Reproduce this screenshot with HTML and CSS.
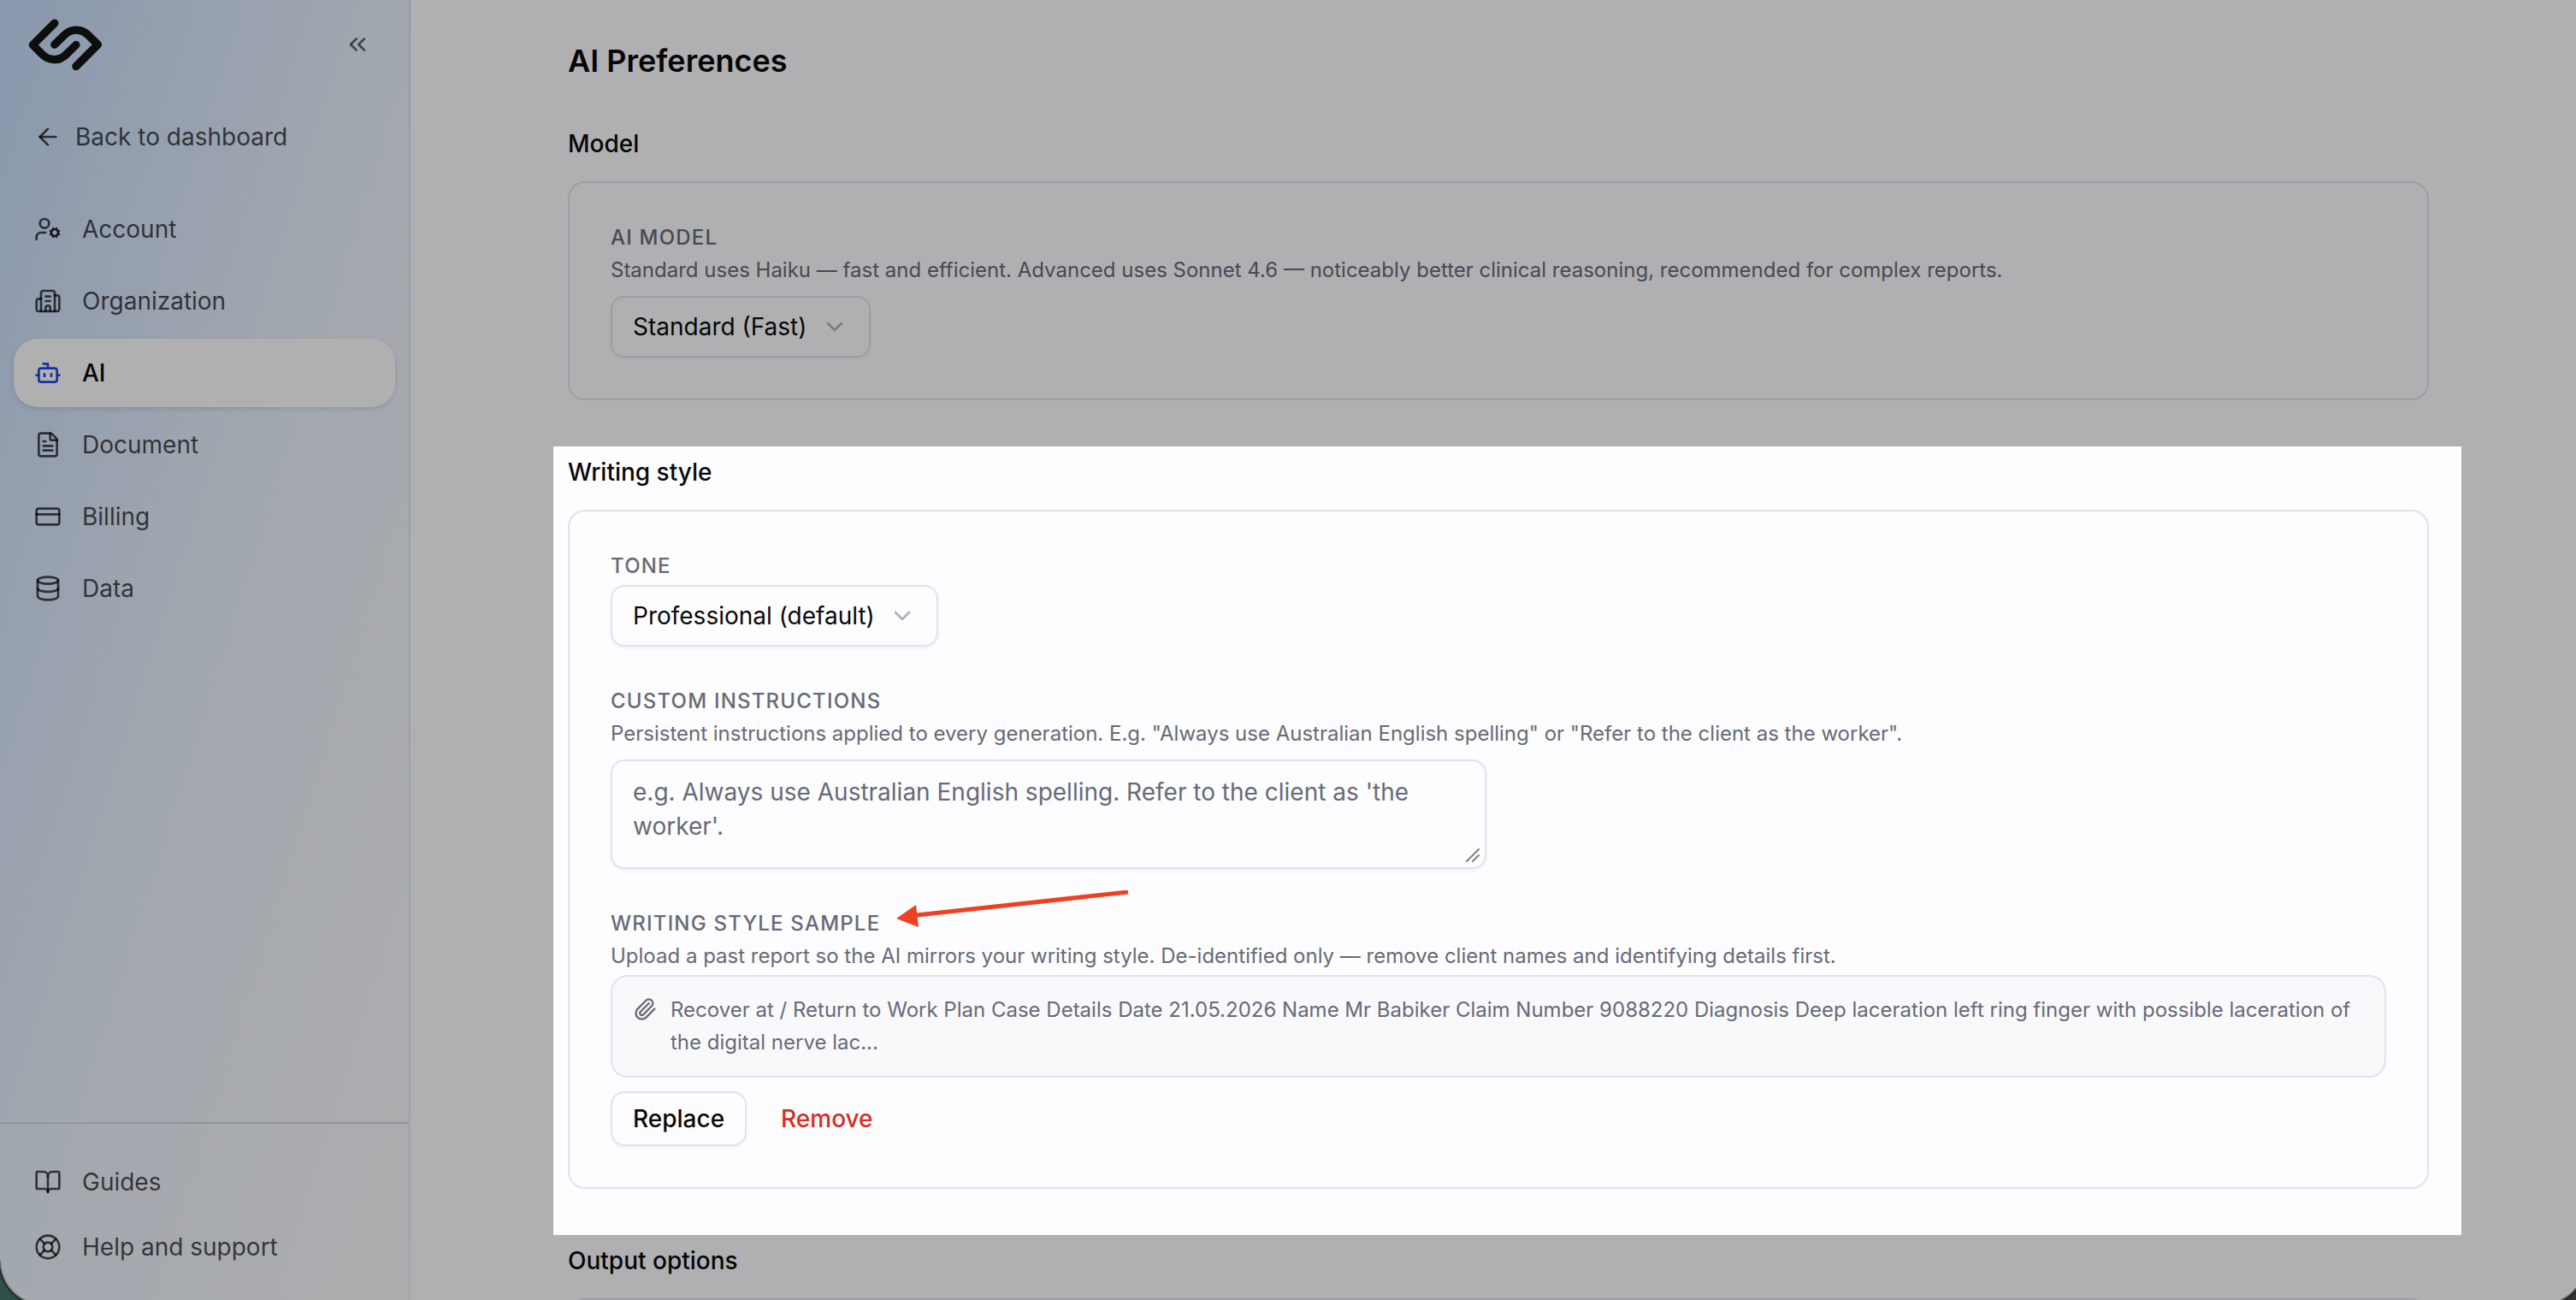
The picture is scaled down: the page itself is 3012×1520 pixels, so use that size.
FILE: index.html
```html
<!DOCTYPE html>
<html lang="en">
<head>
    <meta charset="UTF-8">
    <meta name="viewport" content="width=device-width, initial-scale=1.0">
    <title>AI Preferences</title>
    <link rel="stylesheet" href="styles.css">
</head>
<body>
    <div class="app">
        <aside class="sidebar">
            <div class="sidebar-top">
                <svg class="logo" viewBox="100 65 260 182" role="img" aria-label="Home">
                    <path d="M192 80L116 156L148 188C172 212 208 214 232 190L267 156"/>
                    <path d="M267 231L343 155L311 123C287 99 251 97 227 121L192 155"/>
                </svg>
                <button class="collapse" type="button" aria-label="Collapse sidebar">
                    <svg class="icon" viewBox="0 0 24 24"><path d="m11 17-5-5 5-5"/><path d="m18 17-5-5 5-5"/></svg>
                </button>
            </div>

            <a class="back" href="#">
                <svg class="icon" viewBox="0 0 24 24"><path d="m12 19-7-7 7-7"/><path d="M19 12H5"/></svg>
                Back to dashboard
            </a>

            <nav class="nav">
                <a class="nav-item" href="#">
                    <svg class="icon" viewBox="0 0 24 24"><path d="M10 15H6a4 4 0 0 0-4 4v2"/><path d="m14.305 16.53.923-.382"/><path d="m15.228 13.852-.923-.383"/><path d="m16.852 12.228-.383-.923"/><path d="m16.852 17.772-.383.924"/><path d="m19.148 12.228.383-.923"/><path d="m19.53 18.696-.382-.924"/><path d="m20.772 13.852.924-.383"/><path d="m20.772 16.148.924.383"/><circle cx="18" cy="15" r="3"/><circle cx="9" cy="7" r="4"/></svg>
                    Account
                </a>
                <a class="nav-item" href="#">
                    <svg class="icon" viewBox="0 0 24 24"><path d="M10 12h4"/><path d="M10 8h4"/><path d="M14 21v-3a2 2 0 0 0-4 0v3"/><path d="M6 10H4a2 2 0 0 0-2 2v7a2 2 0 0 0 2 2h16a2 2 0 0 0 2-2V9a2 2 0 0 0-2-2h-2"/><path d="M6 21V5a2 2 0 0 1 2-2h8a2 2 0 0 1 2 2v16"/></svg>
                    Organization
                </a>
                <a class="nav-item active" href="#" aria-current="page">
                    <svg class="icon" viewBox="0 0 24 24"><path d="M12 8V4H8"/><rect width="16" height="12" x="4" y="8" rx="2"/><path d="M2 14h2"/><path d="M20 14h2"/><path d="M15 13v2"/><path d="M9 13v2"/></svg>
                    AI
                </a>
                <a class="nav-item" href="#">
                    <svg class="icon" viewBox="0 0 24 24"><path d="M6 22a2 2 0 0 1-2-2V4a2 2 0 0 1 2-2h8a2.4 2.4 0 0 1 1.704.706l3.588 3.588A2.4 2.4 0 0 1 20 8v12a2 2 0 0 1-2 2z"/><path d="M14 2v5a1 1 0 0 0 1 1h5"/><path d="M10 9H8"/><path d="M16 13H8"/><path d="M16 17H8"/></svg>
                    Document
                </a>
                <a class="nav-item" href="#">
                    <svg class="icon" viewBox="0 0 24 24"><rect width="20" height="14" x="2" y="5" rx="2"/><path d="M2 10h20"/></svg>
                    Billing
                </a>
                <a class="nav-item" href="#">
                    <svg class="icon" viewBox="0 0 24 24"><ellipse cx="12" cy="5" rx="9" ry="3"/><path d="M3 5V19A9 3 0 0 0 21 19V5"/><path d="M3 12A9 3 0 0 0 21 12"/></svg>
                    Data
                </a>
            </nav>

            <div class="sidebar-footer">
                <a class="nav-item" href="#">
                    <svg class="icon" viewBox="0 0 24 24"><path d="M12 7v14"/><path d="M3 18a1 1 0 0 1-1-1V4a1 1 0 0 1 1-1h5a4 4 0 0 1 4 4 4 4 0 0 1 4-4h5a1 1 0 0 1 1 1v13a1 1 0 0 1-1 1h-6a3 3 0 0 0-3 3 3 3 0 0 0-3-3z"/></svg>
                    Guides
                </a>
                <a class="nav-item" href="#">
                    <svg class="icon" viewBox="0 0 24 24"><circle cx="12" cy="12" r="10"/><path d="m4.93 4.93 4.24 4.24"/><path d="m14.83 9.17 4.24-4.24"/><path d="m14.83 14.83 4.24 4.24"/><path d="m9.17 14.83-4.24 4.24"/><circle cx="12" cy="12" r="4"/></svg>
                    Help and support
                </a>
            </div>
        </aside>

        <main class="main">
            <h1>AI Preferences</h1>

            <section class="section">
                <h2>Model</h2>
                <div class="card">
                    <div class="field">
                        <label for="model">AI Model</label>
                        <p class="hint">Standard uses Haiku — fast and efficient. Advanced uses Sonnet 4.6 — noticeably better clinical reasoning, recommended for complex reports.</p>
                        <div class="control select">
                            <select id="model">
                                <option>Standard (Fast)</option>
                            </select>
                            <svg class="icon" viewBox="0 0 24 24"><path d="m6 9 6 6 6-6"/></svg>
                        </div>
                    </div>
                </div>
            </section>

            <section class="section focused">
                <h2>Writing style</h2>
                <div class="card">
                    <div class="field">
                        <label for="tone">Tone</label>
                        <div class="select">
                            <select id="tone">
                                <option>Professional (default)</option>
                            </select>
                            <svg class="icon" viewBox="0 0 24 24"><path d="m6 9 6 6 6-6"/></svg>
                        </div>
                    </div>
                    <div class="field">
                        <label for="instructions">Custom instructions</label>
                        <p class="hint">Persistent instructions applied to every generation. E.g. "Always use Australian English spelling" or "Refer to the client as the worker".</p>
                        <div class="control textbox">
                            <textarea id="instructions" placeholder="e.g. Always use Australian English spelling. Refer to the client as 'the worker'."></textarea>
                            <svg class="grip" viewBox="0 0 16 16"><path d="M1 15L15 1M8 15L15 8"/></svg>
                        </div>
                    </div>
                    <div class="field">
                        <h3>Writing style sample</h3>
                        <p class="hint">Upload a past report so the AI mirrors your writing style. De-identified only — remove client names and identifying details first.</p>
                        <div class="sample">
                            <svg class="clip" viewBox="0 0 24 24"><path d="m16 6-8.414 8.586a2 2 0 0 0 2.829 2.829l8.414-8.586a4 4 0 1 0-5.657-5.657l-8.379 8.551a6 6 0 1 0 8.485 8.485l8.379-8.551"/></svg>
                            <p>Recover at / Return to Work Plan Case Details Date 21.05.2026 Name Mr Babiker Claim Number 9088220 Diagnosis Deep laceration left ring finger with possible laceration of the digital nerve lac...</p>
                        </div>
                        <div class="actions">
                            <button class="btn" type="button">Replace</button>
                            <button class="btn btn-danger" type="button">Remove</button>
                        </div>
                        <svg class="arrow" viewBox="0 0 272 44">
                            <path class="arrow-line" d="M24 29L271 2"/>
                            <path class="arrow-head" d="M0 33L23 17L26 43Z"/>
                        </svg>
                    </div>
                </div>
                <!-- everything outside this box is dimmed by its shadow -->
                <div class="spotlight"></div>
            </section>

            <section class="section">
                <h2>Output options</h2>
                <div class="card"></div>
            </section>
        </main>

        <div class="corner corner-left"></div>
        <div class="corner corner-right"></div>
    </div>
</body>
</html>
```
FILE: styles.css
```css
* {
    box-sizing: border-box;
}
body {
    margin: 0;
    font-family: Inter, "Liberation Sans", sans-serif;
    font-size: 28px;
    line-height: 40px;
    color: #09090b;
    background-color: #fdfdff;
}
h1, h2, h3, p {
    margin: 0;
}
a {
    color: inherit;
    text-decoration: none;
}
button, select, textarea {
    font: inherit;
    color: inherit;
}
.app {
    position: relative;
    display: flex;
    height: 100vh;
    overflow: hidden;
}
.icon {
    flex: none;
    width: 32px;
    height: 32px;
    fill: none;
    stroke: currentColor;
    stroke-width: 2;
    stroke-linecap: round;
    stroke-linejoin: round;
}

/* sidebar */
.sidebar {
    flex: none;
    display: flex;
    flex-direction: column;
    width: 480px;
    border-right: 2px solid rgba(228, 228, 234, 0.3);
    background: linear-gradient(to bottom right, #c5daf9, #e9f1fb 50%, #f8f8fa);
    color: rgba(0, 0, 0, 0.7);
}
.sidebar-top {
    display: flex;
    align-items: center;
    justify-content: space-between;
    height: 104px;
    padding: 0 44px 0 33px;
}
.logo {
    width: 87px;
    height: 61px;
    fill: none;
    stroke: #151515;
    stroke-width: 28;
    stroke-linecap: round;
    stroke-linejoin: round;
}
.collapse {
    display: flex;
    padding: 0;
    border: none;
    background: none;
    color: rgba(0, 0, 0, 0.6);
    cursor: pointer;
}
.back {
    display: flex;
    align-items: center;
    gap: 16px;
    height: 80px;
    margin-top: 16px;
    padding: 0 40px;
}
.nav {
    flex: 1;
    display: flex;
    flex-direction: column;
    gap: 4px;
    padding: 28px 16px;
}
.nav-item {
    display: flex;
    align-items: center;
    gap: 24px;
    height: 80px;
    padding: 0 24px;
    border-radius: 28px;
}
.active {
    background-color: #fcfcfe;
    color: #09090b;
    font-weight: 500;
    box-shadow: 0 2px 6px rgba(0, 0, 0, 0.12);
}
.active .icon {
    color: #2545e5;
}
.sidebar-footer {
    display: flex;
    flex-direction: column;
    gap: 4px;
    padding: 32px 16px 26px;
    border-top: 2px solid #d0d6dd;
}
.sidebar-footer .nav-item {
    height: 72px;
}

/* content */
.main {
    flex: 1;
    padding: 48px 172px 0 184px;
}
h1 {
    margin-bottom: 54px;
    font-size: 36px;
    line-height: 46px;
    font-weight: 600;
}
h2 {
    margin-bottom: 24px;
    font-size: 28px;
    font-weight: 500;
}
.section {
    margin-bottom: 64px;
}
.focused {
    position: relative;
}
.spotlight {
    position: absolute;
    inset: -10px -38px -54px -17px;
    box-shadow: 0 0 0 3000px rgba(0, 0, 0, 0.3);
    pointer-events: none;
}
.card {
    display: flex;
    flex-direction: column;
    gap: 48px;
    padding: 48px;
    border: 2px solid #e2e2e9;
    border-radius: 20px;
}
.field {
    position: relative;
    display: flex;
    flex-direction: column;
    align-items: flex-start;
    gap: 6px;
}
label, h3 {
    font-size: 24px;
    line-height: 32px;
    font-weight: 500;
    letter-spacing: 0.05em;
    text-transform: uppercase;
    color: #666a77;
}
.hint {
    font-size: 24px;
    line-height: 32px;
    color: #666a77;
}
.control {
    margin-top: 8px;
}
.select, .textbox {
    position: relative;
    display: flex;
}
select, textarea, .btn {
    border: 2px solid #e2e2e9;
    border-radius: 16px;
    background-color: #fdfdff;
    box-shadow: 0 2px 4px rgba(0, 0, 0, 0.05);
}
select {
    height: 72px;
    padding: 0 72px 0 24px;
    appearance: none;
}
.select .icon {
    position: absolute;
    top: 20px;
    right: 26px;
    color: #b0b0b8;
    pointer-events: none;
}
.textbox {
    width: 1024px;
    max-width: 100%;
}
textarea {
    width: 100%;
    height: 128px;
    padding: 16px 24px;
    resize: none;
}
textarea::placeholder {
    color: #666a77;
}
.grip {
    position: absolute;
    right: 8px;
    bottom: 8px;
    width: 16px;
    height: 16px;
    fill: none;
    stroke: #808080;
    stroke-width: 2;
    stroke-linecap: round;
}
.sample {
    display: flex;
    gap: 16px;
    width: 100%;
    padding: 20px 24px;
    border: 2px solid #e2e2e9;
    border-radius: 20px;
    background-color: #f9f9fc;
    font-size: 24px;
    line-height: 38px;
    color: #666a77;
}
.clip {
    flex: none;
    width: 28px;
    height: 28px;
    margin-top: 4px;
    fill: none;
    stroke: currentColor;
    stroke-width: 2;
    stroke-linecap: round;
    stroke-linejoin: round;
}
.actions {
    display: flex;
    gap: 14px;
    margin-top: 10px;
}
.btn {
    height: 64px;
    padding: 0 24px;
    font-weight: 500;
    cursor: pointer;
}
.btn-danger {
    border-color: transparent;
    background: none;
    box-shadow: none;
    color: #d92d25;
}
.arrow {
    position: absolute;
    top: -23px;
    left: 334px;
    width: 272px;
    height: 44px;
}
.arrow-line {
    stroke: #ee4023;
    stroke-width: 5;
}
.arrow-head {
    fill: #ee4023;
}

/* rounded window corners */
.corner {
    position: absolute;
    bottom: 0;
    width: 40px;
    height: 46px;
}
.corner-left {
    left: 0;
    background: radial-gradient(circle at 52px 0, transparent 50px, #8a8d8e 51px, #222 53px, #2f4f48 55px);
}
.corner-right {
    right: 0;
    background: radial-gradient(circle at 0 0, transparent 50px, #6c6f6e 51px, #222 53px, #333635 55px);
}
```
